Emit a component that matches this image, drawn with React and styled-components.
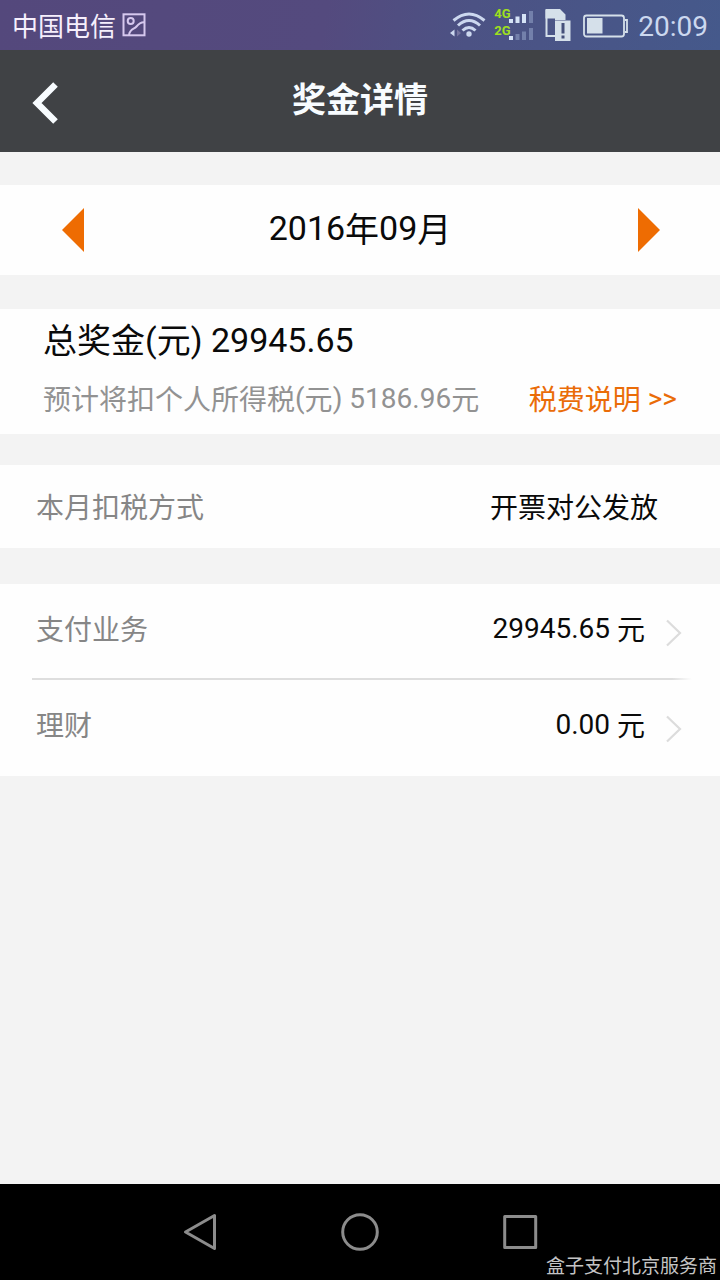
import React from 'react';
import styled, { createGlobalStyle } from 'styled-components';

const GlobalStyle = createGlobalStyle`
  * {
    box-sizing: border-box;
  }

  body {
    margin: 0;
    background: #f3f3f3;
    font-family: Roboto, 'Noto Sans CJK SC', sans-serif;
    -webkit-font-smoothing: antialiased;
  }

  svg {
    display: block;
    flex: none;
  }
`;

const Screen = styled.div`
  display: flex;
  flex-direction: column;
  width: 720px;
  height: 1280px;
  background: #f3f3f3;
  color: #0a0a0a;
  overflow: hidden;
`;

const StatusBar = styled.div`
  display: flex;
  align-items: center;
  justify-content: space-between;
  flex: none;
  height: 50px;
  padding: 0 12px;
  background: linear-gradient(100deg, #54487c 0%, #544a7e 45%, #4c5284 65%, #45598b 100%);
`;

const Carrier = styled.div`
  display: flex;
  align-items: center;
  gap: 6px;
  color: #f6effc;
  font-size: 26px;
  line-height: 50px;

  span {
    padding-top: 3px;
  }
`;

const StatusIcons = styled.div`
  display: flex;
  align-items: center;
  color: #ccd8ef;
`;

const Clock = styled.span`
  margin-left: 9px;
  padding-top: 3px;
  font-size: 28px;
  line-height: 50px;
`;

const Signal = styled.div`
  display: flex;
  margin-left: 7px;
`;

const Network = styled.div`
  display: flex;
  flex-direction: column;
  width: 15px;
  height: 50px;
  padding-top: 5px;
  color: #9fe01e;
  font-size: 13px;
  font-weight: 700;
  line-height: 17px;
`;

const Header = styled.header`
  display: grid;
  grid-template-columns: 100px 1fr 100px;
  flex: none;
  height: 102px;
  padding-top: 1px;
  background: #404245;
`;

const BackButton = styled.div`
  padding: 30px 0 0 32px;
`;

const Title = styled.h1`
  margin: 0;
  color: #f8fcff;
  font-size: 34px;
  font-weight: 700;
  line-height: 98px;
  text-align: center;
`;

const Content = styled.main`
  flex: 1;
  padding-top: 33px;
`;

const Card = styled.section`
  height: ${({ $height }) => $height}px;
  margin-bottom: ${({ $gap }) => $gap || 0}px;
  background: #fefefe;
`;

const MonthPicker = styled.div`
  display: flex;
  align-items: center;
  justify-content: space-between;
  height: 90px;
  padding: 0 60px 0 62px;
`;

const Month = styled.span`
  font-size: 34px;
  line-height: 44px;
  padding: 0 2px 4px 0;
`;

// Han glyphs sit slightly high next to Roboto digits
const Han = styled.span`
  line-height: 1;
  vertical-align: -${({ $drop }) => $drop || 1}px;
`;

const Summary = styled.div`
  padding: 8px 43px 0;
`;

const Total = styled.div`
  height: 46px;
  font-size: 34px;
  line-height: 46px;
`;

const TaxLine = styled.div`
  display: flex;
  justify-content: space-between;
  margin-top: 15px;
  color: #929292;
  font-size: 28px;
  line-height: 42px;
`;

const TaxLink = styled.span`
  color: #ea6c08;
`;

const Row = styled.div`
  display: flex;
  align-items: center;
  justify-content: space-between;
  height: ${({ $height }) => $height}px;
  padding: 0 ${({ $right }) => $right}px ${({ $lift }) => $lift || 0}px 36px;
  font-size: 28px;
  line-height: 42px;
`;

const Label = styled.span`
  color: #868686;
`;

const Amount = styled.span`
  display: flex;
  align-items: center;
  gap: 20px;

  svg {
    margin-top: 9px;
  }
`;

const Divider = styled.div`
  height: 2px;
  margin: -2px 28px 0 32px;
  background: linear-gradient(90deg, #dedede 97%, #fefefe 100%);
`;

const NavBar = styled.nav`
  position: relative;
  display: flex;
  justify-content: center;
  gap: 120px;
  flex: none;
  height: 96px;
  padding-top: 28px;
  background: #000;
`;

const Watermark = styled.span`
  position: absolute;
  right: 3px;
  bottom: 3px;
  color: #c4c4c4;
  font-family: 'Noto Sans CJK SC', sans-serif;
  font-size: 19px;
  font-weight: 400;
  line-height: 24px;
`;

const PictureIcon = () => (
  <svg width="24" height="24" viewBox="0 0 24 24" fill="none" stroke="#d6c8ee" strokeWidth="2">
    <rect x="1.5" y="1.3" width="21" height="21" />
    <circle cx="8.7" cy="8" r="3" />
    <path d="M7 22C8 15.500 12 16.500 14.500 13.500C16.500 11 18 9.500 22 9.300" />
  </svg>
);

const WifiIcon = () => (
  <svg width="37" height="50" viewBox="0 0 37 50" fill="none" stroke="currentColor" strokeWidth="3">
    <path d="M3.500 20.500Q19 7.500 34.500 20.500" />
    <path d="M8 25.500Q19 15.500 30 25.500" />
    <path d="M12.500 30.500Q19 24.500 25.500 30.500" />
    <circle cx="19" cy="34" r="2.700" fill="currentColor" stroke="none" />
    <path d="M0 33L4.500 29.500V36.500Z" fill="currentColor" stroke="none" />
    <path d="M7 29.500L11 33L7 36.500Z" fill="#75749f" stroke="none" />
  </svg>
);

const BarsIcon = () => (
  <svg width="25" height="50" viewBox="0 0 25 50">
    <g fill="#d5e3f6">
      <rect x="0" y="19" width="4" height="4" />
      <rect x="6.500" y="16.500" width="4" height="6.500" />
      <rect x="13" y="14" width="4" height="9" />
      <rect x="0" y="36" width="4" height="4" />
    </g>
    <g fill="#7380ab">
      <rect x="20" y="11" width="4" height="12" />
      <rect x="6.500" y="34" width="4" height="6" />
      <rect x="13" y="31.500" width="4" height="8.500" />
      <rect x="20" y="28" width="4" height="12" />
    </g>
  </svg>
);

const StatusSvg = styled.svg`
  margin-left: ${({ $left }) => $left}px;
`;

const SimIcon = () => (
  <StatusSvg $left={11} width="26" height="50" viewBox="0 0 26 50">
    <path d="M1.500 10V36H12" fill="none" stroke="#d5e0ea" strokeWidth="2" />
    <path d="M0.500 9H15L20.500 14.500V20H10V18.500H0.500Z" fill="#d5e0ea" />
    <rect x="10" y="20.500" width="15.500" height="20.500" fill="#d5e0ea" />
    <path d="M18 23V33.500M18 35.500V38.500" stroke="#45507a" strokeWidth="3" />
  </StatusSvg>
);

const BatteryIcon = () => (
  <StatusSvg $left={12} width="46" height="50" viewBox="0 0 46 50">
    <rect x="1" y="15.500" width="40" height="21" rx="2.500" fill="none" stroke="#d5e0ea" strokeWidth="1.800" />
    <rect x="4" y="18" width="15.500" height="15.500" fill="#d5e0ea" />
    <path d="M42 20H44V32H42" fill="none" stroke="#d5e0ea" strokeWidth="1.800" />
  </StatusSvg>
);

const Triangle = ({ right }) => (
  <svg width="22" height="44" viewBox="0 0 22 44">
    <path d={right ? 'M0 0L22 22L0 44Z' : 'M22 0L0 22L22 44Z'} fill="#ee6c02" />
  </svg>
);

const ChevronIcon = () => (
  <svg width="17" height="28" viewBox="0 0 17 28" fill="none" stroke="#dcdcdc" strokeWidth="2.200">
    <path d="M2 1.500L15 14L2 26.500" />
  </svg>
);

const businesses = [
  { name: '支付业务', amount: '29945.65' },
  { name: '理财', amount: '0.00' },
];

const App = () => {
  return (
    <Screen>
      <GlobalStyle />
      <StatusBar>
        <Carrier>
          <span>中国电信</span>
          <PictureIcon />
        </Carrier>
        <StatusIcons>
          <WifiIcon />
          <Signal>
            <Network>
              <span>4G</span>
              <span>2G</span>
            </Network>
            <BarsIcon />
          </Signal>
          <SimIcon />
          <BatteryIcon />
          <Clock>20:09</Clock>
        </StatusIcons>
      </StatusBar>

      <Header>
        <BackButton>
          <svg width="28" height="44" viewBox="0 0 28 44" fill="none" stroke="#f8fcff" strokeWidth="6.500">
            <path d="M23.500 3.500L5 22L23.500 40.500" />
          </svg>
        </BackButton>
        <Title>奖金详情</Title>
      </Header>

      <Content>
        <Card $height={90} $gap={34}>
          <MonthPicker>
            <Triangle />
            <Month>2016<Han $drop={2}>年</Han>09<Han $drop={2}>月</Han></Month>
            <Triangle right />
          </MonthPicker>
        </Card>

        <Card $height={125} $gap={31}>
          <Summary>
            <Total><Han>总奖金</Han>(<Han>元</Han>) 29945.65</Total>
            <TaxLine>
              <span><Han $drop={2}>预计将扣个人所得税</Han>(<Han $drop={2}>元</Han>) 5186.96<Han $drop={2}>元</Han></span>
              <TaxLink><Han $drop={2}>税费说明</Han> &gt;&gt;</TaxLink>
            </TaxLine>
          </Summary>
        </Card>

        <Card $height={83} $gap={36}>
          <Row $height={83} $right={62}>
            <Label><Han $drop={2}>本月扣税方式</Han></Label>
            <span><Han $drop={2}>开票对公发放</Han></span>
          </Row>
        </Card>

        <Card $height={192}>
          {businesses.map((item, i) => (
            <React.Fragment key={item.name}>
              {i > 0 && <Divider />}
              <Row $height={96} $right={38} $lift={7}>
                <Label><Han $drop={2}>{item.name}</Han></Label>
                <Amount>
                  <span>{item.amount} <Han $drop={2}>元</Han></span>
                  <ChevronIcon />
                </Amount>
              </Row>
            </React.Fragment>
          ))}
        </Card>
      </Content>

      <NavBar>
        <svg width="40" height="40" viewBox="0 0 40 40" fill="none" stroke="#8c8c8c" strokeWidth="3" strokeLinejoin="round">
          <path d="M5.500 20L34.500 3.500V36.500Z" />
        </svg>
        <svg width="40" height="40" viewBox="0 0 40 40" fill="none" stroke="#8c8c8c" strokeWidth="3">
          <circle cx="20" cy="20" r="17.300" />
        </svg>
        <svg width="40" height="40" viewBox="0 0 40 40" fill="none" stroke="#8c8c8c" strokeWidth="3" strokeLinejoin="round">
          <rect x="4.700" y="4.500" width="31" height="31" />
        </svg>
        <Watermark>盒子支付北京服务商</Watermark>
      </NavBar>
    </Screen>
  );
};

export default App;
